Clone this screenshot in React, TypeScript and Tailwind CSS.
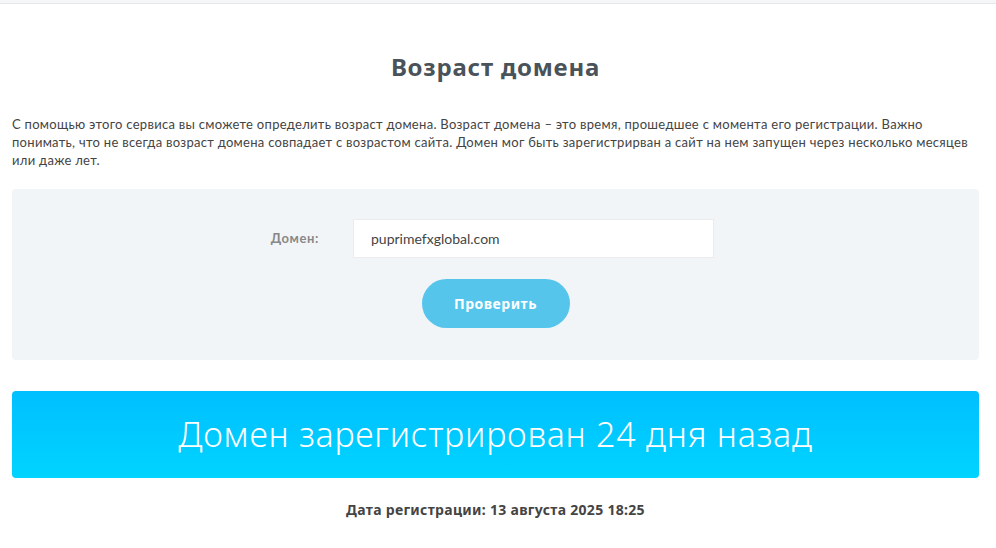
import React from "react";

export default function App() {
  return (
    <div className="min-h-[548px] bg-white text-[#444]" style={{ fontFamily: "Lato, 'Noto Sans', sans-serif" }}>
      <div className="h-[4px] bg-[#f5f6f8] border-b border-[#e6e8eb]" />
      <div className="px-[12px] pr-[17px]">
        <h1
          className="text-center text-[24px] font-bold text-[#4a525a] pt-[45px] leading-[36px] tracking-[0.8px]"
          style={{ fontFamily: "'Noto Sans', sans-serif" }}
        >
          Возраст домена
        </h1>
        <p className="mt-[30px] text-[13px] leading-[18px] text-[#444] tracking-[0.29px]">
          <span className="block whitespace-nowrap">
            С помощью этого сервиса вы сможете определить возраст домена. Возраст домена – это время, прошедшее с момента его регистрации. Важно
          </span>
          <span className="block whitespace-nowrap">
            понимать, что не всегда возраст домена совпадает с возрастом сайта. Домен мог быть зарегистрирван а сайт на нем запущен через несколько месяцев
          </span>
          <span className="block whitespace-nowrap">или даже лет.</span>
        </p>
        <div className="mt-[20px] bg-[#f2f5f7] rounded-[4px] h-[171px] pt-[30px]">
          <div className="flex items-center">
            <div className="w-[307px] text-right text-[13px] font-bold text-[#888] tracking-[0.6px]">Домен:</div>
            <div className="ml-[34px] w-[361px] h-[39px] bg-white border border-[#ececec] flex items-center px-[17px] text-[14px] text-[#444]">
              puprimefxglobal.com
            </div>
          </div>
          <div className="flex justify-center mt-[21px]">
            <button
              className="w-[148px] h-[49px] rounded-full bg-[#55c5ec] text-white text-[14px] font-bold tracking-[0.5px]"
              style={{ fontFamily: "'Noto Sans', sans-serif" }}
            >
              Проверить
            </button>
          </div>
        </div>
        <div
          className="mt-[31px] h-[87px] rounded-[4px] bg-gradient-to-b from-[#00bfff] to-[#00d4ff] flex items-center justify-center text-white text-[34px] font-light tracking-[0.75px]"
          style={{ fontFamily: "'Noto Sans', sans-serif" }}
        >
          Домен зарегистрирован 24 дня назад
        </div>
        <div
          className="mt-[21px] text-center text-[14px] font-bold text-[#444] tracking-[0.3px]"
          style={{ fontFamily: "'Noto Sans', sans-serif" }}
        >
          Дата регистрации: 13 августа 2025 18:25
        </div>
      </div>
    </div>
  );
}
